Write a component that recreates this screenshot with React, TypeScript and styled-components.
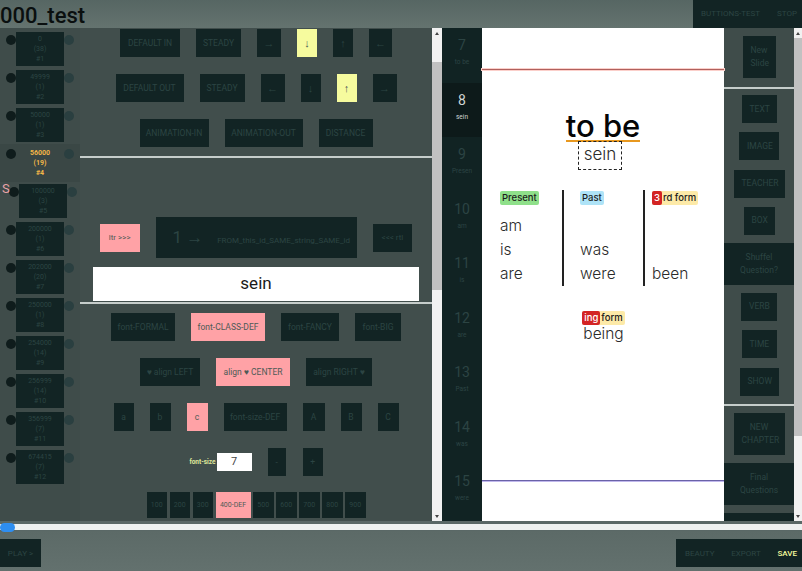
import styled, { createGlobalStyle } from 'styled-components';

const GlobalStyle = createGlobalStyle`
  html, body {
    margin: 0;
    padding: 0;
    height: 100%;
    overflow: hidden;
    background: #5f6e6b;
    font-family: Roboto, "Liberation Sans", sans-serif;
  }
  * { box-sizing: border-box; }
`;

const DARK = '#122424';
const DIM = '#2c4443';
const PANEL = '#414e4c';
const PINK = '#ffa2a6';
const LEMON = '#f6fb9e';

const Page = styled.div`
  width: 802px;
  height: 571px;
  display: flex;
  flex-direction: column;
  overflow: hidden;
`;

const Header = styled.header`
  height: 28px;
  flex: none;
  display: flex;
  justify-content: space-between;
  background: linear-gradient(#566663, #64736f);
`;

const Title = styled.h1`
  margin: 0;
  font-size: 22px;
  font-weight: 500;
  line-height: 32px;
  color: #0a0f0f;
`;

const TopActions = styled.div`
  width: 109px;
  display: flex;
  align-items: center;
  justify-content: space-between;
  padding: 0 5px 1px 8px;
  background: ${DARK};
  color: ${DIM};
  font-size: 8px;
`;

const Main = styled.main`
  height: 493px;
  flex: none;
  display: flex;
`;

const Sidebar = styled.aside`
  width: 80px;
  flex: none;
  padding-top: 2px;
  background: #3f4c4a;
  position: relative;
`;

const GroupRow = styled.div<{ $shift?: boolean; $active?: boolean }>`
  height: 38px;
  display: flex;
  align-items: flex-start;
  padding: 2px 0 0 ${(p) => (p.$shift ? 9 : 6)}px;
  background: ${(p) => (p.$active ? '#3a4745' : 'transparent')};
`;

const Dot = styled.span<{ $right?: boolean }>`
  width: 10px;
  height: 10px;
  margin-top: 3px;
  flex: none;
  border-radius: 50%;
  background: ${(p) => (p.$right ? '#2a3f40' : '#0f1c1c')};
`;

const GroupBox = styled.div<{ $active?: boolean }>`
  width: 48px;
  height: 34px;
  flex: none;
  padding-top: 2px;
  text-align: center;
  font-size: 7px;
  line-height: 10px;
  font-weight: ${(p) => (p.$active ? 700 : 400)};
  color: ${(p) => (p.$active ? '#f2b648' : DIM)};
  background: ${(p) => (p.$active ? 'transparent' : DARK)};
`;

const SMark = styled.span`
  position: absolute;
  left: 2px;
  top: 154px;
  font-size: 13px;
  line-height: 14px;
  color: #eaa3a8;
`;

const Panel = styled.section`
  width: 352px;
  flex: none;
  display: flex;
  flex-direction: column;
  overflow: hidden;
  background: ${PANEL};
`;

const ButtonRow = styled.div<{ $top: number; $gap?: number; $align?: string }>`
  display: flex;
  justify-content: center;
  align-items: ${(p) => p.$align ?? 'flex-start'};
  gap: ${(p) => p.$gap ?? 16}px;
  margin-top: ${(p) => p.$top}px;
`;

const Btn = styled.button<{ $tone?: 'pink' | 'lemon'; $tall?: boolean; $w?: number }>`
  height: ${(p) => (p.$tall ? 42 : 28)}px;
  ${(p) => (p.$w ? `width: ${p.$w}px;` : '')}
  padding: 0 ${(p) => (p.$w ? 0 : 8)}px;
  border: 0;
  font-family: inherit;
  font-size: 8.5px;
  white-space: nowrap;
  background: ${(p) => (p.$tone === 'pink' ? PINK : p.$tone === 'lemon' ? LEMON : DARK)};
  color: ${(p) => (p.$tone ? '#4d5a56' : DIM)};
`;

const ArrowBtn = styled(Btn)`
  font-size: 11px;
`;

const Divider = styled.hr<{ $top: number }>`
  height: 2px;
  margin: ${(p) => p.$top}px 0 0;
  border: 0;
  flex: none;
  background: #c6cdcb;
`;

const FromNumber = styled.span`
  font-size: 17px;
  margin-right: 4px;
`;

const FromText = styled.span`
  font-size: 8px;
  margin-left: 10px;
`;

const SideBtn = styled(Btn)`
  padding: 0 9px;
  font-size: 8px;
`;

const FromBtn = styled(Btn)`
  width: 201px;
  height: 41px;
  padding: 0 0 0 17px;
  text-align: left;
`;

const ValueField = styled.div`
  height: 34px;
  margin: 9px 13px 1px 13px;
  flex: none;
  background: #fff;
  color: #1a1a1a;
  text-align: center;
  font-size: 17px;
  line-height: 33px;
`;

const SizeLabel = styled.span`
  font-size: 6.5px;
  font-weight: 700;
  color: #dfe79a;
  margin-right: 1px;
`;

const SizeInput = styled.div`
  width: 35px;
  height: 18px;
  margin-right: 16px;
  background: #fff;
  color: #444;
  font-size: 11px;
  line-height: 17px;
  text-align: center;
`;

const PlusBtn = styled(Btn)`
  margin-left: 17px;
`;

const WeightBtn = styled(Btn)`
  height: 26px;
  padding: 0;
  font-size: 7px;
`;

const ScrollTrack = styled.div<{ $w: number }>`
  width: ${(p) => p.$w}px;
  flex: none;
  display: flex;
  flex-direction: column;
  background: #f1f1f1;
`;

const ScrollArrow = styled.span<{ $down?: boolean }>`
  height: 10px;
  flex: none;
  display: flex;
  align-items: center;
  justify-content: center;
  &::before {
    content: '';
    border-left: 2.5px solid transparent;
    border-right: 2.5px solid transparent;
    ${(p) => (p.$down ? 'border-top' : 'border-bottom')}: 3px solid #444;
  }
`;

const ScrollThumb = styled.div<{ $top: number; $h: number }>`
  height: ${(p) => p.$h}px;
  margin-top: ${(p) => p.$top}px;
  flex: none;
  background: #c1c1c1;
`;

const ScrollFill = styled.div`
  flex: 1;
`;

const SlideStrip = styled.nav`
  width: 40px;
  flex: none;
  overflow: hidden;
  background: #112323;
`;

const SlideTab = styled.div<{ $active?: boolean }>`
  height: 54.5px;
  padding-top: 7px;
  text-align: center;
  background: ${(p) => (p.$active ? '#0d1a1a' : 'transparent')};
  color: ${(p) => (p.$active ? '#cfd6d4' : DIM)};
`;

const SlideNo = styled.div`
  font-size: 14px;
  line-height: 20px;
`;

const SlideName = styled.div`
  margin-top: 2px;
  font-size: 6.5px;
  line-height: 10px;
  white-space: nowrap;
  overflow: hidden;
`;

const Canvas = styled.div`
  width: 242px;
  flex: none;
  position: relative;
  padding-top: 83px;
  background: #fff;
  font-family: Inter, "Open Sans", sans-serif;
  color: #2a2a2a;
`;

const RedGuide = styled.div`
  position: absolute;
  left: 0;
  right: 0;
  top: 41px;
  height: 1px;
  background: #b0605c;
  box-shadow: 0 0 0 1px #fbcfca;
`;

const BlueGuide = styled.div`
  position: absolute;
  left: 0;
  right: 0;
  top: 452px;
  height: 1px;
  background: #6a62a8;
  box-shadow: 0 1px 0 0 #c0b8ec;
`;

const SlideHead = styled.div`
  display: flex;
  flex-direction: column;
  align-items: center;
`;

const SlideTitle = styled.div`
  font-size: 31px;
  line-height: 29px;
  font-weight: 500;
  color: #050505;
  border-bottom: 2px solid #e8981f;
`;

const Translation = styled.div`
  width: 44px;
  height: 29px;
  margin: -1px 6px 0 0;
  border: 1.5px dashed #222;
  text-align: center;
  font-size: 17px;
  font-weight: 300;
  line-height: 25px;
`;

const VerbTable = styled.div`
  display: grid;
  grid-template-columns: 80px 81px 81px;
  height: 96px;
  margin-top: 20px;
`;

const VerbColumn = styled.div<{ $first?: boolean; $pad: number }>`
  padding: 1px 0 0 ${(p) => p.$pad}px;
  border-left: ${(p) => (p.$first ? 'none' : '2px solid #222')};
`;

const Badge = styled.span<{ $bg: string }>`
  display: inline-block;
  height: 14px;
  padding: 0 2px;
  border-radius: 2px;
  font-size: 9.5px;
  font-weight: 500;
  line-height: 14px;
  vertical-align: top;
  color: #1c1c1c;
  background: ${(p) => p.$bg};
`;

const BadgeMark = styled.span`
  display: inline-block;
  margin-left: -2px;
  margin-right: 1px;
  padding: 0 2px;
  border-radius: 2px;
  color: #fff;
  background: #d32424;
`;

const BadgeLine = styled.div`
  height: 23px;
`;

const VerbWord = styled.div`
  height: 24px;
  font-size: 15.5px;
  font-weight: 300;
  line-height: 24px;
`;

const IngForm = styled.div`
  display: flex;
  flex-direction: column;
  align-items: center;
  margin-top: 25px;
  margin-left: 1px;
`;

const IngWord = styled.div`
  font-size: 15.5px;
  font-weight: 300;
  line-height: 18px;
`;

const Tools = styled.aside`
  width: 70px;
  flex: none;
  display: flex;
  flex-direction: column;
  overflow: hidden;
  background: #3f4c4a;
`;

const ToolStack = styled.div<{ $top: number }>`
  display: flex;
  flex-direction: column;
  align-items: center;
  gap: 9.33px;
  padding-top: ${(p) => p.$top}px;
`;

const ToolBtn = styled(Btn)`
  padding: 0 8px;
  font-size: 8.5px;
  line-height: 13px;
  white-space: pre-line;
`;

const ToolBlock = styled.div<{ $top: number; $h?: number }>`
  height: ${(p) => p.$h ?? 42}px;
  flex: none;
  margin-top: ${(p) => p.$top}px;
  display: flex;
  align-items: center;
  justify-content: center;
  text-align: center;
  white-space: pre-line;
  font-size: 8.5px;
  line-height: 13px;
  color: ${DIM};
  background: ${DARK};
`;

const SliderBar = styled.div`
  height: 10px;
  flex: none;
  position: relative;
  padding-top: 3px;
  background: #5a6866;
`;

const SliderTrack = styled.div`
  height: 6px;
  background: #eef1f0;
`;

const SliderKnob = styled.span`
  position: absolute;
  left: 0;
  top: 2px;
  width: 15px;
  height: 9px;
  border-radius: 5px;
  background: #2e8ef0;
`;

const Footer = styled.footer`
  height: 40px;
  flex: none;
  display: flex;
  justify-content: space-between;
  align-items: flex-start;
  padding-top: 8px;
  background: linear-gradient(#5c6a67, #63716e);
`;

const PlayBtn = styled(Btn)`
  width: 41px;
  padding: 0;
  font-size: 8px;
`;

const FooterActions = styled.div`
  width: 126px;
  height: 28px;
  display: flex;
  align-items: center;
  justify-content: space-between;
  padding: 0 5px 0 9px;
  font-size: 8px;
  color: ${DIM};
  background: ${DARK};
`;

const SaveLabel = styled.span`
  font-weight: 500;
  color: ${LEMON};
`;

const groups = [
  ['0', '(38)', '#1'],
  ['49999', '(1)', '#2'],
  ['50000', '(1)', '#3'],
  ['56000', '(19)', '#4'],
  ['100000', '(3)', '#5'],
  ['200000', '(1)', '#6'],
  ['202000', '(20)', '#7'],
  ['250000', '(1)', '#8'],
  ['254000', '(14)', '#9'],
  ['256999', '(14)', '#10'],
  ['356999', '(7)', '#11'],
  ['674415', '(7)', '#12'],
];

const slides = [
  ['7', 'to be'],
  ['8', 'sein'],
  ['9', 'Presen'],
  ['10', 'am'],
  ['11', 'is'],
  ['12', 'are'],
  ['13', 'Past'],
  ['14', 'was'],
  ['15', 'were'],
];

const weights = ['100', '200', '300', '400-DEF', '500', '600', '700', '800', '900'];

export default function App() {
  return (
    <Page>
      <GlobalStyle />
      <Header>
        <Title>000_test</Title>
        <TopActions>
          <span>BUTTIONS-TEST</span>
          <span>STOP</span>
        </TopActions>
      </Header>

      <Main>
        <Sidebar>
          <SMark>S</SMark>
          {groups.map((g, i) => (
            <GroupRow key={g[2]} $shift={i === 4} $active={i === 3}>
              <Dot />
              <GroupBox $active={i === 3}>
                {g.map((line) => (
                  <div key={line}>{line}</div>
                ))}
              </GroupBox>
              <Dot $right />
            </GroupRow>
          ))}
        </Sidebar>

        <Panel>
          <ButtonRow $top={1}>
            <Btn $w={60}>DEFAULT IN</Btn>
            <Btn $w={45}>STEADY</Btn>
            <ArrowBtn $w={24}>→</ArrowBtn>
            <ArrowBtn $w={20} $tone="lemon">↓</ArrowBtn>
            <ArrowBtn $w={20}>↑</ArrowBtn>
            <ArrowBtn $w={23}>←</ArrowBtn>
          </ButtonRow>
          <ButtonRow $top={17}>
            <Btn $w={68}>DEFAULT OUT</Btn>
            <Btn $w={45}>STEADY</Btn>
            <ArrowBtn $w={24}>←</ArrowBtn>
            <ArrowBtn $w={20}>↓</ArrowBtn>
            <ArrowBtn $w={20} $tone="lemon">↑</ArrowBtn>
            <ArrowBtn $w={24}>→</ArrowBtn>
          </ButtonRow>
          <ButtonRow $top={17}>
            <Btn $w={69}>ANIMATION-IN</Btn>
            <Btn $w={78}>ANIMATION-OUT</Btn>
            <Btn $w={54}>DISTANCE</Btn>
          </ButtonRow>
          <Divider $top={9} />

          <ButtonRow $top={59} $align="center">
            <SideBtn $tone="pink">ltr &gt;&gt;&gt;</SideBtn>
            <FromBtn>
              <FromNumber>1</FromNumber>
              <FromNumber>→</FromNumber>
              <FromText>FROM_this_id_SAME_string_SAME_id</FromText>
            </FromBtn>
            <SideBtn>&lt;&lt;&lt; rtl</SideBtn>
          </ButtonRow>
          <ValueField>sein</ValueField>
          <Divider $top={0} />

          <ButtonRow $top={9}>
            <Btn $w={64}>font-FORMAL</Btn>
            <Btn $w={74} $tone="pink">font-CLASS-DEF</Btn>
            <Btn $w={58}>font-FANCY</Btn>
            <Btn $w={46}>font-BIG</Btn>
          </ButtonRow>
          <ButtonRow $top={17}>
            <Btn $w={60}>♥ align LEFT</Btn>
            <Btn $w={74} $tone="pink">align ♥ CENTER</Btn>
            <Btn $w={66}>align RIGHT ♥</Btn>
          </ButtonRow>
          <ButtonRow $top={17}>
            <Btn $w={20}>a</Btn>
            <Btn $w={21}>b</Btn>
            <Btn $w={21} $tone="pink">c</Btn>
            <Btn $w={63}>font-size-DEF</Btn>
            <Btn $w={22}>A</Btn>
            <Btn $w={21}>B</Btn>
            <Btn $w={21}>C</Btn>
          </ButtonRow>
          <ButtonRow $top={17} $gap={0} $align="center">
            <SizeLabel>font-size</SizeLabel>
            <SizeInput>7</SizeInput>
            <Btn $w={18}>-</Btn>
            <PlusBtn $w={20}>+</PlusBtn>
          </ButtonRow>
          <ButtonRow $top={16} $gap={2.5}>
            {weights.map((w) => (
              <WeightBtn key={w} $w={w === '400-DEF' ? 35 : 20.5} $tone={w === '400-DEF' ? 'pink' : undefined}>
                {w}
              </WeightBtn>
            ))}
          </ButtonRow>
        </Panel>

        <ScrollTrack $w={10}>
          <ScrollArrow />
          <ScrollThumb $top={24} $h={228} />
          <ScrollFill />
          <ScrollArrow $down />
        </ScrollTrack>

        <SlideStrip>
          {slides.map(([no, name]) => (
            <SlideTab key={no} $active={no === '8'}>
              <SlideNo>{no}</SlideNo>
              <SlideName>{name}</SlideName>
            </SlideTab>
          ))}
        </SlideStrip>

        <Canvas>
          <RedGuide />
          <BlueGuide />
          <SlideHead>
            <SlideTitle>to be</SlideTitle>
            <Translation>sein</Translation>
          </SlideHead>
          <VerbTable>
            <VerbColumn $first $pad={18}>
              <BadgeLine>
                <Badge $bg="#8fe08a">Present</Badge>
              </BadgeLine>
              <VerbWord>am</VerbWord>
              <VerbWord>is</VerbWord>
              <VerbWord>are</VerbWord>
            </VerbColumn>
            <VerbColumn $pad={16}>
              <BadgeLine>
                <Badge $bg="#aee3f7">Past</Badge>
              </BadgeLine>
              <VerbWord />
              <VerbWord>was</VerbWord>
              <VerbWord>were</VerbWord>
            </VerbColumn>
            <VerbColumn $pad={7}>
              <BadgeLine>
                <Badge $bg="#fdeaa8">
                  <BadgeMark>3</BadgeMark>rd form
                </Badge>
              </BadgeLine>
              <VerbWord />
              <VerbWord />
              <VerbWord>been</VerbWord>
            </VerbColumn>
          </VerbTable>
          <IngForm>
            <Badge $bg="#fdeaa8">
              <BadgeMark>ing</BadgeMark>form
            </Badge>
            <IngWord>being</IngWord>
          </IngForm>
        </Canvas>

        <Tools>
          <ToolStack $top={8}>
            <ToolBtn $tall $w={33}>{'New\nSlide'}</ToolBtn>
          </ToolStack>
          <Divider $top={9} />
          <ToolStack $top={6}>
            <ToolBtn $w={35}>TEXT</ToolBtn>
            <ToolBtn $w={40}>IMAGE</ToolBtn>
            <ToolBtn $w={51}>TEACHER</ToolBtn>
            <ToolBtn $w={31}>BOX</ToolBtn>
          </ToolStack>
          <ToolBlock $top={8}>{'Shuffel\nQuestion?'}</ToolBlock>
          <ToolStack $top={8}>
            <ToolBtn $w={36}>VERB</ToolBtn>
            <ToolBtn $w={35}>TIME</ToolBtn>
            <ToolBtn $w={39}>SHOW</ToolBtn>
          </ToolStack>
          <Divider $top={8} />
          <ToolStack $top={7}>
            <ToolBtn $tall $w={51}>{'NEW\nCHAPTER'}</ToolBtn>
          </ToolStack>
          <ToolBlock $top={8}>{'Final\nQuestions'}</ToolBlock>
          <ToolBlock $top={8} $h={10} />
        </Tools>

        <ScrollTrack $w={8}>
          <ScrollArrow />
          <ScrollThumb $top={0} $h={398} />
          <ScrollFill />
          <ScrollArrow $down />
        </ScrollTrack>
      </Main>

      <SliderBar>
        <SliderTrack />
        <SliderKnob />
      </SliderBar>

      <Footer>
        <PlayBtn>PLAY &gt;</PlayBtn>
        <FooterActions>
          <span>BEAUTY</span>
          <span>EXPORT</span>
          <SaveLabel>SAVE</SaveLabel>
        </FooterActions>
      </Footer>
    </Page>
  );
}
